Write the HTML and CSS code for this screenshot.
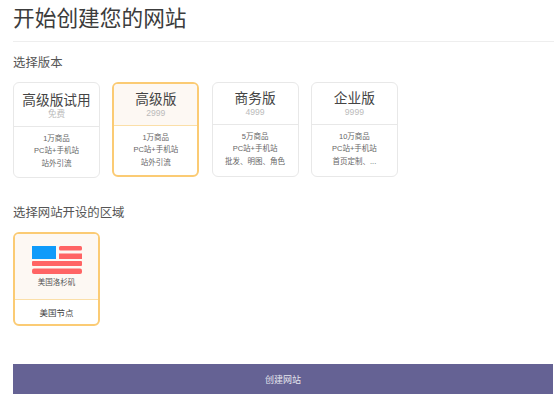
FILE: index.html
```html
<!DOCTYPE html>
<html lang="zh-CN">

<head>
    <meta charset="UTF-8">
    <title>开始创建您的网站</title>
    <link rel="stylesheet" href="styles.css">
</head>

<body>
    <h1 class="title">开始创建您的网站</h1>
    <h2 class="label">选择版本</h2>
    <div class="plans">
        <div class="card">
            <div class="head">
                <div class="name">高级版试用</div>
                <div class="price">免费</div>
            </div>
            <div class="info">
                <p>1万商品</p>
                <p>PC站+手机站</p>
                <p>站外引流</p>
            </div>
        </div>
        <div class="card active short">
            <div class="head">
                <div class="name">高级版</div>
                <div class="price">2999</div>
            </div>
            <div class="info">
                <p>1万商品</p>
                <p>PC站+手机站</p>
                <p>站外引流</p>
            </div>
        </div>
        <div class="card short">
            <div class="head">
                <div class="name">商务版</div>
                <div class="price">4999</div>
            </div>
            <div class="info">
                <p>5万商品</p>
                <p>PC站+手机站</p>
                <p>批发、明图、角色</p>
            </div>
        </div>
        <div class="card short">
            <div class="head">
                <div class="name">企业版</div>
                <div class="price">9999</div>
            </div>
            <div class="info">
                <p>10万商品</p>
                <p>PC站+手机站</p>
                <p>首页定制、...</p>
            </div>
        </div>
    </div>
    <h2 class="label second">选择网站开设的区域</h2>
    <div class="card active region">
        <div class="region-top">
            <svg class="flag" width="50" height="28" viewBox="0 0 50 28">
                <rect x="0" y="0" width="24" height="13" fill="#0f9bfa" />
                <rect x="27" y="0" width="23" height="4.5" rx="1.5" fill="#ff6464" />
                <rect x="27" y="7.5" width="23" height="5.5" fill="#ff6464" />
                <rect x="0" y="15" width="50" height="5" rx="1" fill="#ff6464" />
                <rect x="0" y="22.5" width="50" height="5.5" rx="2" fill="#ff6464" />
            </svg>
            <div class="city">美国洛杉矶</div>
        </div>
        <div class="region-name">美国节点</div>
    </div>
    <button class="create">创建网站</button>
</body>

</html>
```

FILE: styles.css
```css
*{
    margin: 0;
    padding: 0;
    box-sizing: border-box;
}
body{
    font-family: "Liberation Sans", "Noto Sans CJK SC", sans-serif;
    background-color: #fff;
    color: #444;
    overflow: hidden;
    padding-left: 13px;
    width: 554px;
    height: 400px;
}
.title{
    font-size: 21.7px;
    font-weight: normal;
    line-height: 26px;
    padding-top: 6px;
    height: 42px;
    border-bottom: 1px solid #eee;
    color: #3c3c3c;
}
.label{
    font-size: 12.4px;
    font-weight: normal;
    line-height: 16px;
    margin-top: 13px;
    color: #555;
}
.second{
    margin-top: 27px;
}
.plans{
    display: flex;
    align-items: flex-start;
    gap: 12.3px;
    margin-top: 11px;
}
.card{
    width: 87px;
    height: 96px;
    border: 1px solid #e8e8e8;
    border-radius: 6px;
    overflow: hidden;
}
.short{
    height: 95px;
}
.head{
    height: 44px;
    padding-top: 10px;
    border-bottom: 1px solid #e8e8e8;
    text-align: center;
}
.short .head{
    height: 42px;
    padding-top: 8px;
}
.name{
    font-size: 13.7px;
    line-height: 16px;
    color: #444;
}
.price{
    font-size: 8.6px;
    line-height: 10px;
    color: #bbb;
}
.info{
    padding-top: 6px;
    text-align: center;
}
.info p{
    font-size: 7.5px;
    line-height: 12.4px;
    color: #666;
}
.active{
    border: 2px solid #fbcb74;
}
.active .head{
    background-color: #fdf8f3;
    border-bottom-color: #fbdfa8;
}
.region{
    height: 94px;
    margin-top: 11px;
}
.region-top{
    height: 66px;
    padding-top: 12px;
    background-color: #fdf8f3;
    border-bottom: 1px solid #fbdfa8;
    text-align: center;
}
.flag{
    display: block;
    margin: 0 auto;
}
.city{
    font-size: 7.5px;
    line-height: 10px;
    margin-top: 4px;
    color: #555;
}
.region-name{
    font-size: 8.5px;
    line-height: 26px;
    text-align: center;
    color: #444;
}
.create{
    display: block;
    width: 540px;
    height: 30px;
    margin-top: 38px;
    border: none;
    background-color: #656294;
    color: #e6e6ee;
    font-family: inherit;
    font-size: 9px;
}
```
